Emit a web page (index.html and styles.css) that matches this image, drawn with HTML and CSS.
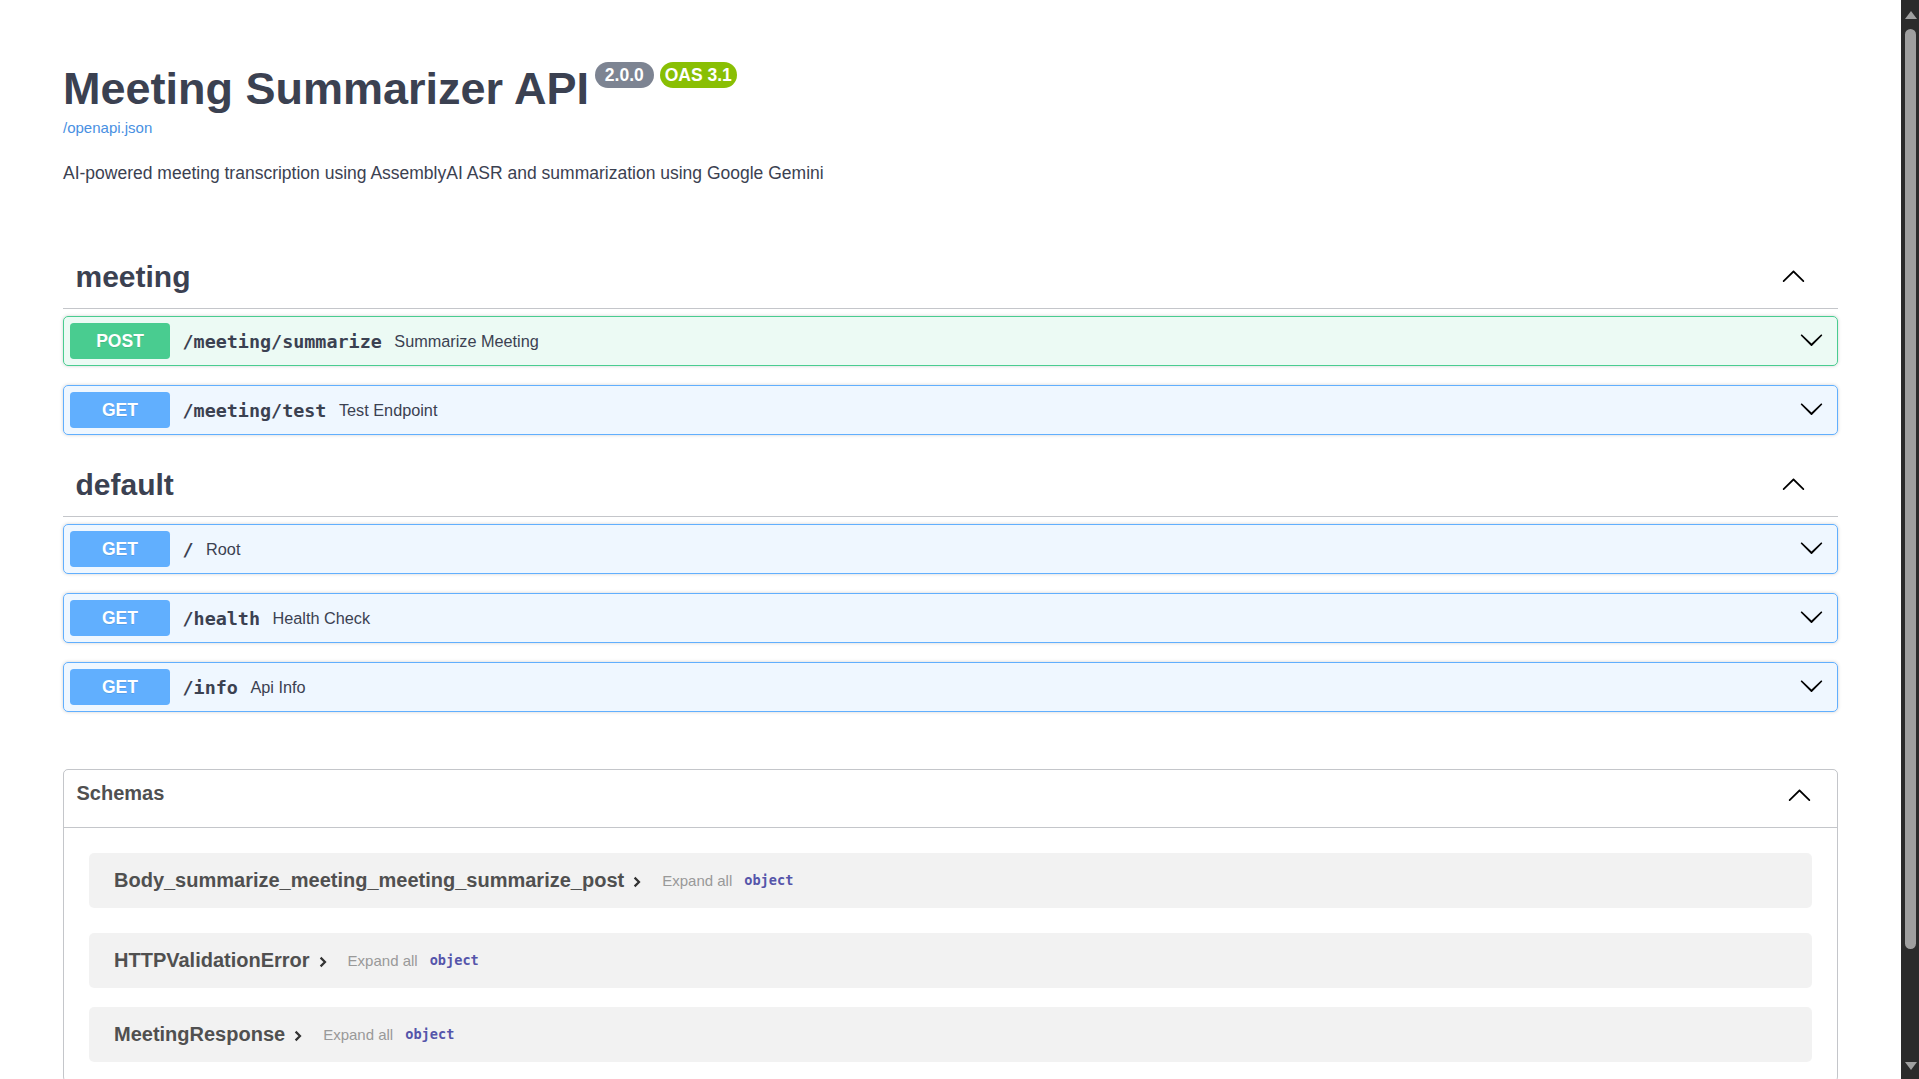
FILE: index.html
```html
<!DOCTYPE html>
<html lang="en">
<head>
<meta charset="utf-8">
<title>Meeting Summarizer API - Swagger UI</title>
<link rel="stylesheet" href="styles.css">
</head>
<body>
<div class="page">
<div class="wrapper">
  <header class="info">
    <h1 class="title">
      <span class="title-text">Meeting Summarizer API</span>
      <span class="badge badge-version"> 2.0.0 </span>
      <span class="badge badge-oas">OAS 3.1</span>
    </h1>
    <a class="spec-link" href="#">/openapi.json</a>
    <p class="desc">AI-powered meeting transcription using AssemblyAI ASR and summarization using Google Gemini</p>
  </header>

  <section class="tag-section">
    <h3 class="tag-head">
      <span class="tag-name">meeting</span>
      <svg class="tag-arrow" viewBox="0 0 20 20" width="25" height="25"><path d="M17.418 14.908c.272.268.709.268.979 0s.271-.701 0-.969l-7.908-7.830c-.27-.268-.707-.268-.979 0l-7.908 7.830c-.27.268-.27.701 0 .969.271.268.709.268.979 0L10 7.767l7.418 7.141z"/></svg>
    </h3>
    <div class="op op-post">
      <span class="method">POST</span>
      <span class="path">/meeting/summarize</span>
      <span class="summary">Summarize Meeting</span>
      <svg class="op-arrow" viewBox="0 0 20 20" width="25" height="25"><path d="M17.418 6.109c.272-.268.709-.268.979 0s.271.701 0 .969l-7.908 7.83c-.27.268-.707.268-.979 0l-7.908-7.83c-.27-.268-.27-.701 0-.969.271-.268.709-.268.979 0L10 13.25l7.418-7.141z"/></svg>
    </div>
    <div class="op op-get">
      <span class="method">GET</span>
      <span class="path">/meeting/test</span>
      <span class="summary">Test Endpoint</span>
      <svg class="op-arrow" viewBox="0 0 20 20" width="25" height="25"><path d="M17.418 6.109c.272-.268.709-.268.979 0s.271.701 0 .969l-7.908 7.83c-.27.268-.707.268-.979 0l-7.908-7.83c-.27-.268-.27-.701 0-.969.271-.268.709-.268.979 0L10 13.25l7.418-7.141z"/></svg>
    </div>
  </section>

  <section class="tag-section">
    <h3 class="tag-head">
      <span class="tag-name">default</span>
      <svg class="tag-arrow" viewBox="0 0 20 20" width="25" height="25"><path d="M17.418 14.908c.272.268.709.268.979 0s.271-.701 0-.969l-7.908-7.830c-.27-.268-.707-.268-.979 0l-7.908 7.830c-.27.268-.27.701 0 .969.271.268.709.268.979 0L10 7.767l7.418 7.141z"/></svg>
    </h3>
    <div class="op op-get">
      <span class="method">GET</span>
      <span class="path">/</span>
      <span class="summary">Root</span>
      <svg class="op-arrow" viewBox="0 0 20 20" width="25" height="25"><path d="M17.418 6.109c.272-.268.709-.268.979 0s.271.701 0 .969l-7.908 7.83c-.27.268-.707.268-.979 0l-7.908-7.83c-.27-.268-.27-.701 0-.969.271-.268.709-.268.979 0L10 13.25l7.418-7.141z"/></svg>
    </div>
    <div class="op op-get">
      <span class="method">GET</span>
      <span class="path">/health</span>
      <span class="summary">Health Check</span>
      <svg class="op-arrow" viewBox="0 0 20 20" width="25" height="25"><path d="M17.418 6.109c.272-.268.709-.268.979 0s.271.701 0 .969l-7.908 7.83c-.27.268-.707.268-.979 0l-7.908-7.83c-.27-.268-.27-.701 0-.969.271-.268.709-.268.979 0L10 13.25l7.418-7.141z"/></svg>
    </div>
    <div class="op op-get">
      <span class="method">GET</span>
      <span class="path">/info</span>
      <span class="summary">Api Info</span>
      <svg class="op-arrow" viewBox="0 0 20 20" width="25" height="25"><path d="M17.418 6.109c.272-.268.709-.268.979 0s.271.701 0 .969l-7.908 7.83c-.27.268-.707.268-.979 0l-7.908-7.83c-.27-.268-.27-.701 0-.969.271-.268.709-.268.979 0L10 13.25l7.418-7.141z"/></svg>
    </div>
  </section>

  <section class="models">
    <h4 class="models-head">
      <span class="models-title">Schemas</span>
      <svg class="models-arrow" viewBox="0 0 20 20" width="25" height="25"><path d="M17.418 14.908c.272.268.709.268.979 0s.271-.701 0-.969l-7.908-7.830c-.27-.268-.707-.268-.979 0l-7.908 7.830c-.27.268-.27.701 0 .969.271.268.709.268.979 0L10 7.767l7.418 7.141z"/></svg>
    </h4>
    <div class="model">
      <span class="model-title">Body_summarize_meeting_meeting_summarize_post</span>
      <svg class="model-toggle" viewBox="0 0 8 12" width="8" height="12"><polyline points="1.6,1.6 6,6 1.6,10.4"/></svg>
      <span class="expand-all">Expand all</span>
      <span class="prop-type">object</span>
    </div>
    <div class="model">
      <span class="model-title">HTTPValidationError</span>
      <svg class="model-toggle" viewBox="0 0 8 12" width="8" height="12"><polyline points="1.6,1.6 6,6 1.6,10.4"/></svg>
      <span class="expand-all">Expand all</span>
      <span class="prop-type">object</span>
    </div>
    <div class="model">
      <span class="model-title">MeetingResponse</span>
      <svg class="model-toggle" viewBox="0 0 8 12" width="8" height="12"><polyline points="1.6,1.6 6,6 1.6,10.4"/></svg>
      <span class="expand-all">Expand all</span>
      <span class="prop-type">object</span>
    </div>
  </section>
</div>
</div>

<div class="scrollbar" aria-hidden="true">
  <div class="sb-btn"><span class="sb-tri sb-tri-up"></span></div>
  <div class="sb-track"><div class="sb-thumb"></div></div>
  <div class="sb-btn"><span class="sb-tri sb-tri-down"></span></div>
</div>
</body>
</html>
```
FILE: styles.css
```css
html {
  background: #fff;
}

body {
  margin: 0;
  font-family: "Liberation Sans", Arial, sans-serif;
  color: #3b4151;
}

.page {
  margin-right: 18px;
}

.wrapper {
  box-sizing: border-box;
  max-width: 1825px;
  margin: 0 auto;
  padding: 0 25px 80px;
}

/* ---------- fake window scrollbar (overlay at the right edge) ---------- */
.scrollbar {
  position: fixed;
  top: 0;
  right: 0;
  width: 18px;
  height: 100%;
  display: flex;
  flex-direction: column;
  background: #2b2b2b;
}
.sb-btn {
  height: 27px;
  flex: 0 0 27px;
  display: flex;
  align-items: center;
  justify-content: center;
}
.sb-tri {
  width: 0;
  height: 0;
  border-left: 6px solid transparent;
  border-right: 6px solid transparent;
}
.sb-tri-up {
  margin: 2px 0 0 1px;
  border-bottom: 8px solid #a0a0a0;
}
.sb-tri-down {
  margin: 0 0 0 1px;
  border-top: 8px solid #a0a0a0;
}
.sb-track {
  flex: 1 1 auto;
  padding: 2px 3px 0 4px;
}
.sb-thumb {
  height: 920px;
  border-radius: 6px;
  background: #9f9f9f;
}

/* ---------- info ---------- */
.info {
  padding-top: 63px;
  margin-bottom: 63px;
}

.title {
  display: flex;
  align-items: flex-start;
  margin: 0;
  font-size: 45px;
  line-height: 52px;
  font-weight: 700;
  color: #3b4151;
}

.badge {
  margin: -1px 0 0 6px;
  padding: 2.5px 5px;
  border-radius: 57px;
  font-size: 17.5px;
  line-height: 21px;
  font-weight: 700;
  color: #fff;
  white-space: pre;
}
.badge-version {
  background: #7d8492;
}
.badge-oas {
  background: #89bf04;
}

.spec-link {
  display: block;
  width: max-content;
  margin-top: 4px;
  font-size: 15px;
  line-height: 18px;
  color: #4990e2;
  text-decoration: none;
}

.desc {
  margin: 26px 0 0;
  font-size: 17.5px;
  line-height: 20px;
  color: #3b4151;
}

/* ---------- tags ---------- */
.tag-section {
  display: flex;
  flex-direction: column;
}

.tag-head {
  box-sizing: border-box;
  display: flex;
  align-items: center;
  height: 63px;
  margin: 0 0 7px;
  padding: 0 25px 0 12.5px;
  border-bottom: 1px solid rgba(59, 65, 81, 0.3);
  font-size: 30px;
  font-weight: 700;
  color: #3b4151;
}

.tag-name {
  flex: 1 1 auto;
}

.tag-arrow {
  margin: -4px 7px 0 0;
  fill: #000;
}

.op {
  box-sizing: border-box;
  display: flex;
  align-items: center;
  height: 50px;
  margin: 0 0 19px;
  padding: 0 13px 0 6px;
  border: 1px solid #000;
  border-radius: 5px;
  box-shadow: 0 0 3.75px rgba(0, 0, 0, 0.19);
}
.op-post {
  background: rgba(73, 204, 144, 0.1);
  border-color: #49cc90;
}
.op-get {
  background: rgba(97, 175, 254, 0.1);
  border-color: #61affe;
}

.method {
  display: flex;
  align-items: center;
  justify-content: center;
  width: 100px;
  height: 36px;
  border-radius: 3.75px;
  font-size: 17.5px;
  font-weight: 700;
  color: #fff;
  text-shadow: 0 1px 0 rgba(0, 0, 0, 0.1);
}
.op-post .method {
  background: #49cc90;
}
.op-get .method {
  background: #61affe;
}

.path {
  padding: 0 12.5px;
  font-family: "DejaVu Sans Mono", "Liberation Mono", monospace;
  font-size: 18.4px;
  font-weight: 700;
  color: #3b4151;
}

.summary {
  flex: 1 1 auto;
  font-size: 16.25px;
  color: #3b4151;
}

.op-arrow {
  margin-top: -3px;
  fill: #000;
}

/* ---------- models ---------- */
.models {
  margin: 37.5px 0 0;
  border: 1px solid rgba(59, 65, 81, 0.3);
  border-radius: 5px;
}

.models-head {
  box-sizing: border-box;
  display: flex;
  align-items: flex-start;
  height: 58px;
  margin: 0;
  padding: 12.5px 25px 0 12.5px;
  border-bottom: 1px solid rgba(59, 65, 81, 0.3);
  font-size: 20px;
  line-height: 23px;
  font-weight: 700;
  color: #505050;
}

.models-title {
  flex: 1 1 auto;
}

.models-arrow {
  fill: #000;
}

.model {
  display: flex;
  align-items: center;
  height: 55px;
  margin: 0 25px 19px;
  padding: 0 25px;
  border-radius: 5px;
  background: rgba(0, 0, 0, 0.05);
}
.model:first-of-type {
  margin: 25px;
}

.model-title {
  font-size: 20px;
  font-weight: 700;
  color: #505050;
}

.model-toggle {
  margin: 3px 0 0 9px;
  fill: none;
  stroke: #333;
  stroke-width: 2.2;
}

.expand-all {
  margin-left: 21px;
  font-size: 15px;
  color: #999;
}

.prop-type {
  margin-left: 12px;
  font-family: "DejaVu Sans Mono", "Liberation Mono", monospace;
  font-size: 13.6px;
  font-weight: 700;
  color: #55a;
}
```
